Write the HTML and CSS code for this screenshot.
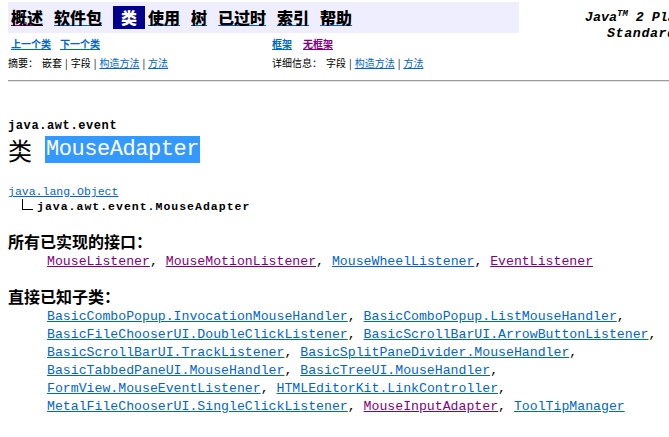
FILE: index.html
```html
<!DOCTYPE html>
<html lang="zh-CN">
<head>
<meta charset="utf-8">
<title>MouseAdapter</title>
<link rel="stylesheet" href="styles.css">
</head>
<body>
<div class="page">
  <header class="top">
    <div class="topmain">
      <nav class="navbar">
        <a class="nv v" href="#"><b>概述</b></a>
        <a class="nv" href="#"><b>软件包</b></a>
        <span class="nv cur"><b>类</b></span>
        <a class="nv" href="#"><b>使用</b></a>
        <a class="nv" href="#"><b>树</b></a>
        <a class="nv" href="#"><b>已过时</b></a>
        <a class="nv" href="#"><b>索引</b></a>
        <a class="nv" href="#"><b>帮助</b></a>
      </nav>
      <div class="subrow r2">
        <div class="c1"><a href="#">上一个类</a><a href="#">下一个类</a></div>
        <div class="c2"><a href="#">框架</a><a class="v" href="#">无框架</a></div>
      </div>
      <div class="subrow r3">
        <div class="c1"><span class="lbl">摘要：</span>嵌套<span class="sep">|</span>字段<span class="sep">|</span><a href="#">构造方法</a><span class="sep">|</span><a href="#">方法</a></div>
        <div class="c2"><span class="lbl">详细信息：</span>字段<span class="sep">|</span><a href="#">构造方法</a><span class="sep">|</span><a href="#">方法</a></div>
      </div>
    </div>
    <div class="brand">
      <div class="b1">Java<sup>TM</sup>&nbsp;2&nbsp;Platform</div>
      <div class="b2">Standard&nbsp;Ed.&nbsp;5.0</div>
    </div>
  </header>
  <hr class="rule">
  <div class="pkg">java.awt.event</div>
  <div class="title"><span class="kind">类</span><span class="name">MouseAdapter</span></div>
  <div class="tree">
    <div class="l1"><a href="#">java.lang.Object</a></div>
    <div class="l2"><span class="inh"></span><b>java.awt.event.MouseAdapter</b></div>
  </div>
  <dl class="info first">
    <dt>所有已实现的接口：</dt>
    <dd><a class="v" href="#">MouseListener</a>, <a class="v" href="#">MouseMotionListener</a>, <a href="#">MouseWheelListener</a>, <a class="v" href="#">EventListener</a></dd>
  </dl>
  <dl class="info second">
    <dt>直接已知子类：</dt>
    <dd><a href="#">BasicComboPopup.InvocationMouseHandler</a>, <a href="#">BasicComboPopup.ListMouseHandler</a>, <a href="#">BasicFileChooserUI.DoubleClickListener</a>, <a href="#">BasicScrollBarUI.ArrowButtonListener</a>, <a href="#">BasicScrollBarUI.TrackListener</a>, <a href="#">BasicSplitPaneDivider.MouseHandler</a>, <a href="#">BasicTabbedPaneUI.MouseHandler</a>, <a href="#">BasicTreeUI.MouseHandler</a>, <a href="#">FormView.MouseEventListener</a>, <a href="#">HTMLEditorKit.LinkController</a>, <a href="#">MetalFileChooserUI.SingleClickListener</a>, <a class="v" href="#">MouseInputAdapter</a>, <a href="#">ToolTipManager</a></dd>
  </dl>
</div>
</body>
</html>
```

FILE: styles.css
```css
* { box-sizing: border-box; }
html, body { margin: 0; padding: 0; background: #ffffff; }
body {
  font-family: "Noto Sans CJK SC", "Noto Sans", sans-serif;
  color: #000000;
  overflow: hidden;
}
.page { padding: 2px 8px 0 8px; }
a { color: #0066cc; text-decoration: underline; }
a.v { color: #800080; }

/* header */
.top {
  display: flex;
  align-items: flex-start;
  overflow: hidden;
  margin-right: -8px;
}
.topmain { flex: 0 0 511px; }
.navbar {
  display: flex;
  align-items: center;
  gap: 3px;
  height: 31px;
  padding-left: 3px;
  background: #eeeeff;
}
.nv {
  font-size: 16px;
  line-height: 23px;
  font-weight: 700;
  margin-right: 8px;
}
.nv b { color: #000000; }
.nv.cur {
  background: #00008b;
  padding: 0 8px;
  margin-right: 0;
}
.nv.cur b { color: #ffffff; }

.subrow {
  display: flex;
  font-size: 10px;
  line-height: 14px;
  white-space: nowrap;
}
.r2 { margin-top: 4px; }
.r3 { margin-top: 5px; }
.c1 { flex: 0 0 264px; }
.r2 .c1 { padding-left: 3px; }
.r2 a { font-weight: 700; }
.r2 .c1 a + a { margin-left: 9px; }
.r2 .c2 a + a { margin-left: 11px; }
.lbl { margin-right: 4px; }
.sep { margin: 0 3px; }

.brand {
  flex: 0 0 auto;
  margin-left: 66px;
  padding-top: 8px;
  font-family: "Liberation Mono", monospace;
  font-weight: 700;
  font-style: italic;
  font-size: 13.333px;
  line-height: 16px;
  white-space: nowrap;
}
.brand sup { font-size: 9px; line-height: 0; }
.b2 { padding-left: 22px; letter-spacing: 0.6px; }

.rule {
  margin: 10px -8px 0 0;
  height: 0;
  border: 0;
  border-top: 1px solid #9c9c9c;
  border-bottom: 1px solid #e6e6e6;
}

/* title */
.pkg {
  margin-top: 37px;
  font-family: "Liberation Mono", monospace;
  font-weight: 700;
  font-size: 12px;
  letter-spacing: 0.6px;
  line-height: 15px;
}
.title {
  display: flex;
  align-items: center;
  height: 27px;
  margin-top: 2px;
}
.kind { font-size: 24px; line-height: 27px; margin-right: 13px; }
.name {
  font-family: "Liberation Mono", monospace;
  font-size: 22px;
  letter-spacing: -0.45px;
  line-height: 27px;
  background: #3399ff;
  color: #ffffff;
  padding: 0 1px;
}

/* inheritance tree */
.tree {
  margin-top: 21px;
  font-family: "Liberation Mono", monospace;
  font-size: 11.5px;
  line-height: 15px;
}
.l2 { padding-left: 14px; }
.inh {
  display: inline-block;
  width: 11px;
  height: 11px;
  border-left: 1px solid #000000;
  border-bottom: 1px solid #000000;
  margin-right: 4px;
}
.l2 b { letter-spacing: 1px; }

/* definition lists */
.info { margin: 0; }
.info.first { margin-top: 17px; }
.info.second { margin-top: 15px; }
.info dt {
  font-size: 16px;
  font-weight: 700;
  line-height: 20px;
}
.info dd {
  margin: 2px -8px 0 39px;
  font-family: "Liberation Mono", monospace;
  font-size: 13.2px;
  line-height: 18px;
}
```
